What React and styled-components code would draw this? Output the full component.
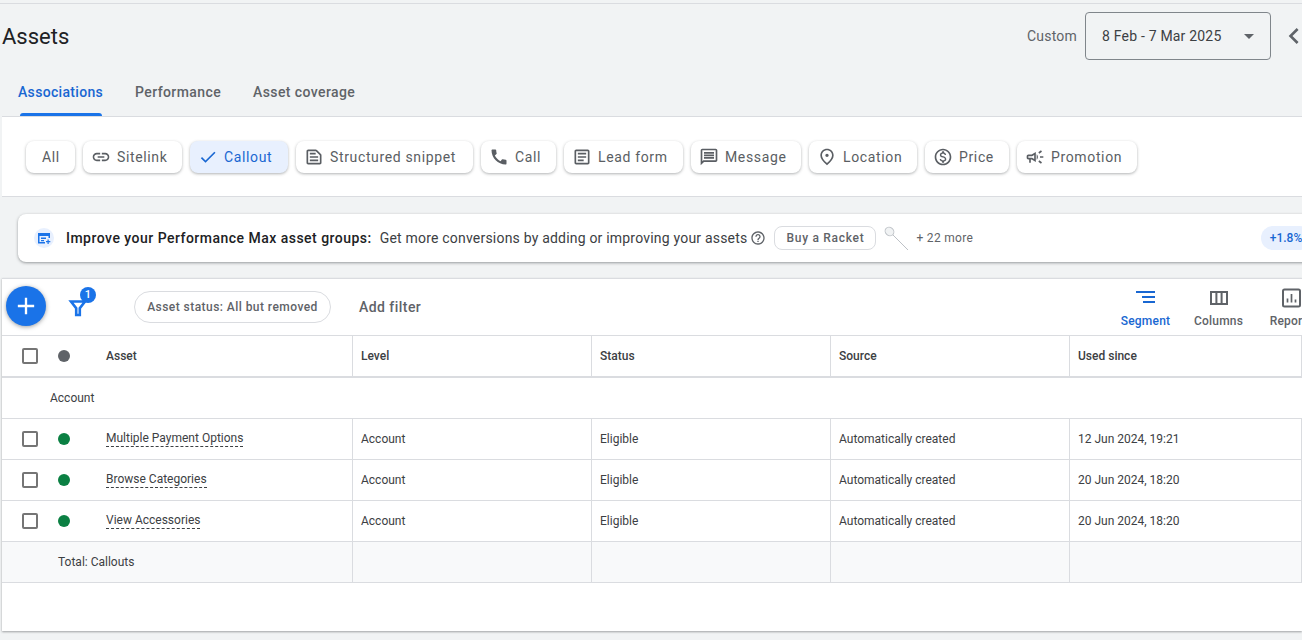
import React from 'react';
import styled, { createGlobalStyle } from 'styled-components';
import {
  MdLink,
  MdCheck,
  MdOutlineTextSnippet,
  MdCall,
  MdOutlineArticle,
  MdOutlineMessage,
  MdOutlinePlace,
  MdOutlineMonetizationOn,
  MdOutlineCampaign,
  MdChevronLeft,
  MdArrowDropDown,
  MdAdd,
  MdOutlineHelpOutline,
} from 'react-icons/md';

const chips = [
  { label: 'All', width: 49 },
  { label: 'Sitelink', width: 99, icon: MdLink },
  { label: 'Callout', width: 98, icon: MdCheck, active: true },
  { label: 'Structured snippet', width: 177, icon: MdOutlineTextSnippet },
  { label: 'Call', width: 75, icon: MdCall },
  { label: 'Lead form', width: 119, icon: MdOutlineArticle },
  { label: 'Message', width: 110, icon: MdOutlineMessage },
  { label: 'Location', width: 108, icon: MdOutlinePlace },
  { label: 'Price', width: 84, icon: MdOutlineMonetizationOn },
  { label: 'Promotion', width: 120, icon: MdOutlineCampaign },
];

const rows = [
  { asset: 'Multiple Payment Options', since: '12 Jun 2024, 19:21' },
  { asset: 'Browse Categories', since: '20 Jun 2024, 18:20' },
  { asset: 'View Accessories', since: '20 Jun 2024, 18:20' },
];

const SegmentIcon = () => (
  <svg width="24" height="24" viewBox="0 0 24 24" fill="#1967d2">
    <rect x="2" y="5" width="19" height="2" />
    <rect x="8" y="10" width="13" height="2" />
    <rect x="9" y="15" width="12" height="2" />
  </svg>
);

const ColumnsIcon = () => (
  <svg width="24" height="24" viewBox="0 0 24 24" fill="none" stroke="#5f6368" strokeWidth="2">
    <rect x="4" y="6" width="16" height="12" />
    <path d="M9.4 6v12M14.6 6v12" />
  </svg>
);

const ReportsIcon = () => (
  <svg width="24" height="24" viewBox="0 0 24 24" fill="none" stroke="#5f6368" strokeWidth="2">
    <rect x="3" y="3.5" width="17" height="17" rx="1.5" />
    <path d="M7.5 12.5v4M11.5 8v8.5M15.5 13.5v3" strokeWidth="1.7" />
  </svg>
);

const FilterIcon = () => (
  <svg width="24" height="24" viewBox="0 0 24 24" fill="none" stroke="#1a73e8" strokeWidth="2.6">
    <path d="M5 6.5h14l-5.2 6.6V20h-3.6v-6.9z" />
  </svg>
);

const RacketIcon = () => (
  <svg width="26" height="26" viewBox="0 0 26 26" fill="none" stroke="#bdc1c6">
    <ellipse cx="6.5" cy="6.5" rx="4.6" ry="4" transform="rotate(40 6.5 6.5)" fill="#f1f3f4" />
    <path d="M10 10l15 15" />
  </svg>
);

const App = () => (
  <Page>
    <GlobalStyle />
    <Header>
      <TitleRow>
        <Title>Assets</Title>
        <DateArea>
          <DateLabel>Custom</DateLabel>
          <DateBox>
            <span>8 Feb - 7 Mar 2025</span>
            <MdArrowDropDown size={24} color="#5f6368" />
          </DateBox>
          <Chevron size={32} color="#5f6368" />
        </DateArea>
      </TitleRow>
      <Tabs>
        <Tab $active>Associations</Tab>
        <Tab>Performance</Tab>
        <Tab>Asset coverage</Tab>
      </Tabs>
    </Header>

    <ChipPanel>
      {chips.map((chip) => (
        <Chip key={chip.label} $active={chip.active} $width={chip.width} $hasIcon={!!chip.icon}>
          {chip.icon && <chip.icon size={20} />}
          {chip.label}
        </Chip>
      ))}
    </ChipPanel>

    <Banner>
      <BannerIcon>
        <svg width="14" height="14" viewBox="0 0 14 14" fill="#1a73e8">
          <path d="M1 2h12v5h-1.5V5h-9v6H8v1.5H1z" />
          <path d="M4 6.5h5V8H4zM4 9h3v1.2H4zM10.5 8.5h1.2v1.6h1.6v1.2h-1.6v1.6h-1.2v-1.6H9v-1.2h1.5z" />
        </svg>
      </BannerIcon>
      <BannerTitle>Improve your Performance Max asset groups:</BannerTitle>
      <BannerText>Get more conversions by adding or improving your assets</BannerText>
      <HelpIcon size={16} color="#5f6368" />
      <RacketButton>Buy a Racket</RacketButton>
      <RacketIcon />
      <MoreText>+ 22 more</MoreText>
      <UpliftPill>+1.8%</UpliftPill>
    </Banner>

    <Card>
      <Toolbar>
        <Fab>
          <MdAdd size={28} color="#fff" />
        </Fab>
        <FilterButton>
          <FilterIcon />
          <FilterBadge>1</FilterBadge>
        </FilterButton>
        <StatusChip>Asset status: All but removed</StatusChip>
        <AddFilter>Add filter</AddFilter>
        <Actions>
          <Action $active>
            <SegmentIcon />
            Segment
          </Action>
          <Action>
            <ColumnsIcon />
            Columns
          </Action>
          <Action>
            <ReportsIcon />
            Reports
          </Action>
        </Actions>
      </Toolbar>

      <HeadRow>
        <FirstCell>
          <Checkbox />
          <Dot $color="#5f6368" />
          <AssetName>Asset</AssetName>
        </FirstCell>
        <Cell>Level</Cell>
        <Cell>Status</Cell>
        <Cell>Source</Cell>
        <Cell>Used since</Cell>
      </HeadRow>

      <GroupRow>Account</GroupRow>

      {rows.map((row) => (
        <Row key={row.asset}>
          <FirstCell>
            <Checkbox />
            <Dot $color="#0b8043" />
            <AssetName>
              <Dashed>{row.asset}</Dashed>
            </AssetName>
          </FirstCell>
          <Cell>Account</Cell>
          <Cell>Eligible</Cell>
          <Cell>Automatically created</Cell>
          <Cell>{row.since}</Cell>
        </Row>
      ))}

      <TotalRow>
        <TotalLabel>Total: Callouts</TotalLabel>
        <Cell />
        <Cell />
        <Cell />
        <Cell />
      </TotalRow>
    </Card>
  </Page>
);

export default App;

const GlobalStyle = createGlobalStyle`
  body {
    margin: 0;
    background: #f1f3f4;
    font-family: Roboto, "Liberation Sans", sans-serif;
    overflow: hidden;
  }
`;

const Page = styled.div`
  width: 1302px;
  height: 640px;
  overflow: hidden;
  padding-top: 3px;
  box-sizing: border-box;
  background: #f1f3f4;
`;

const Header = styled.header`
  height: 113px;
  box-sizing: border-box;
  border-top: 1px solid #dadce0;
  display: flex;
  flex-direction: column;
`;

const TitleRow = styled.div`
  height: 64px;
  padding: 8px 0 0 2px;
  box-sizing: border-box;
  display: flex;
  justify-content: space-between;
  align-items: flex-start;
`;

const Title = styled.h1`
  margin: 1px 0 0;
  font-size: 22px;
  font-weight: 400;
  line-height: 48px;
  color: #202124;
`;

const DateArea = styled.div`
  display: flex;
  align-items: center;
  height: 48px;
  margin-right: -8px;
`;

const DateLabel = styled.span`
  font-size: 14px;
  letter-spacing: 0.2px;
  color: #5f6368;
  margin-right: 8px;
`;

const DateBox = styled.div`
  width: 186px;
  height: 48px;
  box-sizing: border-box;
  border: 1px solid #80868b;
  border-radius: 4px;
  padding: 0 9px 0 16px;
  display: flex;
  align-items: center;
  justify-content: space-between;
  font-size: 14px;
  letter-spacing: 0.2px;
  color: #3c4043;
`;

const Chevron = styled(MdChevronLeft)`
  margin-left: 7px;
`;

const Tabs = styled.nav`
  flex: 1;
  display: flex;
  gap: 32px;
  padding-left: 18px;
`;

const Tab = styled.div`
  position: relative;
  height: 49px;
  box-sizing: border-box;
  padding-top: 16px;
  font-size: 14px;
  font-weight: 500;
  letter-spacing: ${(p) => (p.$active ? '0.32px' : '0.4px')};
  line-height: 18px;
  color: ${(p) => (p.$active ? '#1967d2' : '#5f6368')};

  &::after {
    content: '';
    display: ${(p) => (p.$active ? 'block' : 'none')};
    position: absolute;
    left: 2px;
    right: 1px;
    bottom: 0;
    height: 3px;
    border-radius: 3px 3px 0 0;
    background: #1a73e8;
  }
`;

const ChipPanel = styled.section`
  margin-left: 2px;
  height: 81px;
  box-sizing: border-box;
  background: #fff;
  border-top: 1px solid #dadce0;
  border-bottom: 1px solid #dadce0;
  padding: 24px 0 0 24px;
  display: flex;
  gap: 8px;
`;

const Chip = styled.div`
  width: ${(p) => p.$width}px;
  height: 32px;
  box-sizing: border-box;
  padding-left: ${(p) => (p.$hasIcon ? '8px' : '16px')};
  border-radius: 8px;
  display: flex;
  align-items: center;
  gap: 6px;
  font-size: 14px;
  letter-spacing: 0.64px;
  color: ${(p) => (p.$active ? '#1967d2' : '#5a5e63')};
  background: ${(p) => (p.$active ? '#e8f0fe' : '#fff')};
  box-shadow: 0 1px 3px rgba(60, 64, 67, 0.4);
`;

const Banner = styled.section`
  margin: 17px 0 0 18px;
  width: 1340px;
  height: 48px;
  box-sizing: border-box;
  padding: 0 47px 0 16px;
  background: #fff;
  border-radius: 8px;
  box-shadow: 0 1px 3px rgba(60, 64, 67, 0.5);
  display: flex;
  align-items: center;
`;

const BannerIcon = styled.div`
  width: 20px;
  height: 20px;
  border-radius: 50%;
  background: #e8f0fe;
  display: flex;
  align-items: center;
  justify-content: center;
  margin-right: 12px;
`;

const BannerTitle = styled.span`
  font-size: 14px;
  font-weight: 500;
  letter-spacing: 0.48px;
  color: #202124;
  margin-right: 8px;
`;

const BannerText = styled.span`
  font-size: 14px;
  letter-spacing: 0.2px;
  color: #3c4043;
`;

const HelpIcon = styled(MdOutlineHelpOutline)`
  margin: 0 8px 0 3px;
`;

const RacketButton = styled.div`
  width: 102px;
  height: 24px;
  box-sizing: border-box;
  border: 1px solid #dadce0;
  border-radius: 8px;
  display: flex;
  align-items: center;
  justify-content: center;
  font-size: 12px;
  font-weight: 500;
  letter-spacing: 0.7px;
  color: #5f6368;
  margin-right: 7px;
`;

const MoreText = styled.span`
  font-size: 12px;
  letter-spacing: 0.3px;
  color: #5f6368;
  margin-left: 7px;
`;

const UpliftPill = styled.div`
  margin-left: auto;
  width: 50px;
  height: 24px;
  border-radius: 12px;
  background: #e8f0fe;
  display: flex;
  align-items: center;
  justify-content: center;
  font-size: 12px;
  font-weight: 500;
  color: #1967d2;
`;

const Card = styled.section`
  margin: 16px 0 0 2px;
  height: 353px;
  box-sizing: border-box;
  background: #fff;
  border-top: 1px solid #dadce0;
  box-shadow: 0 1px 2px rgba(60, 64, 67, 0.45);
`;

const Toolbar = styled.div`
  height: 57px;
  box-sizing: border-box;
  border-bottom: 1px solid #dadce0;
  padding-left: 4px;
  display: flex;
  align-items: center;
`;

const Fab = styled.div`
  width: 40px;
  height: 40px;
  margin-top: -2px;
  border-radius: 50%;
  background: #1a73e8;
  box-shadow: 0 1px 4px rgba(60, 64, 67, 0.5);
  display: flex;
  align-items: center;
  justify-content: center;
`;

const FilterButton = styled.div`
  position: relative;
  margin-left: 20px;
  width: 24px;
  height: 24px;
`;

const FilterBadge = styled.span`
  position: absolute;
  top: -8px;
  left: 14px;
  width: 16px;
  height: 16px;
  border-radius: 50%;
  background: #1a73e8;
  color: #fff;
  font-size: 11px;
  font-weight: 500;
  line-height: 16px;
  text-align: center;
`;

const StatusChip = styled.div`
  margin-left: 44px;
  width: 197px;
  height: 32px;
  box-sizing: border-box;
  border: 1px solid #dadce0;
  border-radius: 16px;
  display: flex;
  align-items: center;
  justify-content: center;
  font-size: 12px;
  font-weight: 500;
  letter-spacing: 0.45px;
  color: #5f6368;
`;

const AddFilter = styled.div`
  margin-left: 28px;
  font-size: 14px;
  font-weight: 500;
  letter-spacing: 0.45px;
  color: #5f6368;
`;

const Actions = styled.div`
  margin-left: auto;
  margin-right: -26px;
  display: flex;
`;

const Action = styled.div`
  width: 73px;
  display: flex;
  flex-direction: column;
  align-items: center;
  gap: 4px;
  font-size: 12px;
  font-weight: 500;
  letter-spacing: 0.2px;
  color: ${(p) => (p.$active ? '#1967d2' : '#5f6368')};
`;

const Row = styled.div`
  height: 41px;
  box-sizing: border-box;
  display: grid;
  grid-template-columns: 351px 239px 239px 239px 232px;
  border-bottom: 1px solid #dadce0;
  font-size: 12px;
  color: #3c4043;
`;

const HeadRow = styled(Row)`
  height: 42px;
  border-bottom-width: 2px;
  font-weight: 500;
`;

const TotalRow = styled(Row)`
  background: #f8f9fa;
`;

const Cell = styled.div`
  display: flex;
  align-items: center;
  padding-left: 8px;
  border-right: 1px solid #dadce0;
`;

const FirstCell = styled(Cell)`
  padding-left: 20px;
`;

const TotalLabel = styled(Cell)`
  padding-left: 56px;
`;

const GroupRow = styled.div`
  height: 41px;
  box-sizing: border-box;
  padding-left: 48px;
  display: flex;
  align-items: center;
  border-bottom: 1px solid #dadce0;
  font-size: 12px;
  color: #3c4043;
`;

const Checkbox = styled.span`
  width: 16px;
  height: 16px;
  box-sizing: border-box;
  border: 2px solid #757575;
  border-radius: 2px;
`;

const Dot = styled.span`
  width: 12px;
  height: 12px;
  border-radius: 50%;
  background: ${(p) => p.$color};
  margin-left: 20px;
`;

const AssetName = styled.span`
  margin-left: 36px;
`;

const Dashed = styled.span`
  border-bottom: 1px dashed #3c4043;
  padding-bottom: 1px;
  position: relative;
  top: -1px;
`;
